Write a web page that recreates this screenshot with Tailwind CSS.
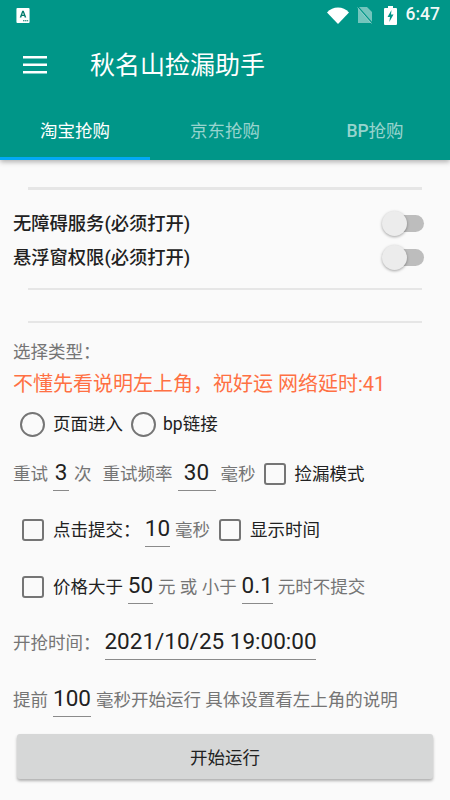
<!DOCTYPE html>
<html lang="en">
<head>
    <meta charset="UTF-8">
    <meta name="viewport" content="width=device-width, initial-scale=1.0">
    <title>秋名山捡漏助手</title>
    <script src="https://cdn.jsdelivr.net/npm/@tailwindcss/browser@4"></script>
</head>
<body class="w-[450px] h-[800px] overflow-hidden bg-[#fafafa] font-['Roboto','Noto_Sans_CJK_SC',sans-serif]">
    <!-- header -->
    <header class="relative z-10 h-[160px] bg-[#009688] text-white shadow-[0_2px_5px_rgba(0,0,0,0.3)]">
        <div class="flex items-center h-[30px] pl-4 pr-[10px]">
            <svg class="w-[14px] h-[15px]" viewBox="0 0 14 16">
                <path d="M1 0h12a1 1 0 0 1 1 1v14a1 1 0 0 1-1 1H1a1 1 0 0 1-1-1V1a1 1 0 0 1 1-1z" fill="#fff"/>
                <path d="M3.500 10 6.200 3h1.600l2.700 7H8.800l-.5-1.500H5.700L5.200 10zM6.100 7.300h1.800L7 4.700z" fill="#00796b"/>
                <path d="M7 13h1.500v1H7zM9 13h1.500v1H9zM11 13h1.500v1H11z" fill="#00796b"/>
            </svg>
            <svg class="ml-auto w-[22px] h-[17px]" viewBox="0 0 22 17"><path d="M0 5.500C3 2.200 6.800.5 11 .5s8 1.700 11 5L11 17z" fill="#fff"/></svg>
            <svg class="ml-[8px] w-[16px] h-[18px]" viewBox="0 0 16 18">
                <path d="M1 1h9l5 5v11H1z" fill="#fff" fill-opacity="0.45"/>
                <path d="M1 1 15 17" stroke="#009688" stroke-width="1.500"/>
                <path d="M0.500 1.500 14.500 17.500" stroke="#fff" stroke-opacity="0.45" stroke-width="1"/>
            </svg>
            <svg class="ml-[11px] w-[13px] h-[19px]" viewBox="0 0 13 19">
                <path d="M4 0h5v2h3a1 1 0 0 1 1 1v15a1 1 0 0 1-1 1H1a1 1 0 0 1-1-1V3a1 1 0 0 1 1-1h3z" fill="#fff"/>
                <path d="M7.500 4 3.500 11h2.500l-.7 5 4.200-7.500H7z" fill="#009688"/>
            </svg>
            <span class="ml-[9px] text-[17.500px] leading-none font-medium text-white/95">6:47</span>
        </div>
        <div class="flex items-center h-[70px] pl-[23px]">
            <svg class="w-[24px] h-[18px]" viewBox="0 0 24 18" fill="#fff">
                <rect y="0" width="24" height="2.500"/><rect y="7.500" width="24" height="2.500"/><rect y="15" width="24" height="2.500"/>
            </svg>
            <h1 class="ml-[43px] text-[25px] leading-none font-normal">秋名山捡漏助手</h1>
        </div>
        <nav class="flex h-[60px] text-[17.500px]">
            <div class="flex-1 flex items-center justify-center pt-[6px] border-b-[3px] border-[#03a9f4]">淘宝抢购</div>
            <div class="flex-1 flex items-center justify-center pt-[6px] border-b-[3px] border-transparent text-white/60">京东抢购</div>
            <div class="flex-1 flex items-center justify-center pt-[6px] border-b-[3px] border-transparent text-white/60"><span class="font-medium">BP</span>抢购</div>
        </nav>
    </header>

    <main class="px-[13px] text-[17.500px] text-[#757575]">
        <div class="h-[2.500px] mt-[27px] mx-[15px] bg-[#e6e6e6]"></div>

        <div class="mt-[17px] flex items-center justify-between h-[34px] text-[18.300px] text-[#212121] font-medium">
            <span>无障碍服务(必须打开)</span>
            <span class="relative block w-[34px] h-[17px] mr-[13px] rounded-full bg-[#bdbdbd]">
                <span class="absolute left-[-8px] top-[-4px] w-[25px] h-[25px] rounded-full bg-[#ececec] shadow-[0_1px_3px_rgba(0,0,0,0.35)]"></span>
            </span>
        </div>
        <div class="flex items-center justify-between h-[34px] text-[18.300px] text-[#212121] font-medium">
            <span>悬浮窗权限(必须打开)</span>
            <span class="relative block w-[34px] h-[17px] mr-[13px] rounded-full bg-[#bdbdbd]">
                <span class="absolute left-[-8px] top-[-4px] w-[25px] h-[25px] rounded-full bg-[#ececec] shadow-[0_1px_3px_rgba(0,0,0,0.35)]"></span>
            </span>
        </div>

        <div class="h-[2.500px] mt-[13px] mx-[15px] bg-[#e6e6e6]"></div>
        <div class="h-[2.500px] mt-[30.500px] mx-[15px] bg-[#e6e6e6]"></div>

        <div class="mt-[17px] h-[24px] flex items-center">选择类型：</div>
        <div class="mt-[5px] h-[30px] flex items-center text-[20px] text-[#ff7043] whitespace-nowrap">不懂先看说明左上角，祝好运 网络延时:41</div>

        <!-- radios -->
        <div class="mt-[10px] h-[30px] flex items-center pl-[7px] text-[#212121]">
            <span class="w-[25px] h-[25px] rounded-full border-[2.500px] border-[#757575]"></span>
            <span class="ml-[8px]">页面进入</span>
            <span class="ml-[8px] w-[25px] h-[25px] rounded-full border-[2.500px] border-[#757575]"></span>
            <span class="ml-[7px]">bp链接</span>
        </div>

        <!-- retry row -->
        <div class="mt-[18px] h-[34px] flex items-center whitespace-nowrap">
            <span>重试</span>
            <span class="ml-[5px] w-[16px] h-[34px] flex items-center justify-center pb-[1px] text-[22.500px] text-[#212121] border-b border-[#8a8a8a]">3</span>
            <span class="ml-[5px]">次</span>
            <span class="ml-[11px]">重试频率</span>
            <span class="ml-[5px] w-[38px] h-[34px] flex items-center justify-center pb-[1px] text-[22.500px] text-[#212121] border-b border-[#8a8a8a]">30</span>
            <span class="ml-[5px]">毫秒</span>
            <span class="ml-[8px] w-[22px] h-[22px] rounded-[3px] border-[2.500px] border-[#757575]"></span>
            <span class="ml-[9px] text-[#212121]">捡漏模式</span>
        </div>

        <!-- click submit row -->
        <div class="mt-[22px] h-[34px] flex items-center pl-[9px] whitespace-nowrap">
            <span class="w-[22px] h-[22px] rounded-[3px] border-[2.500px] border-[#757575]"></span>
            <span class="ml-[9px] text-[#212121]">点击提交：</span>
            <span class="ml-[4.500px] w-[25px] h-[34px] flex items-center justify-center pb-[1px] text-[22.500px] text-[#212121] border-b border-[#8a8a8a]">10</span>
            <span class="ml-[5px]">毫秒</span>
            <span class="ml-[9px] w-[22px] h-[22px] rounded-[3px] border-[2.500px] border-[#757575]"></span>
            <span class="ml-[9px] text-[#212121]">显示时间</span>
        </div>

        <!-- price row -->
        <div class="mt-[23px] h-[34px] flex items-center pl-[9px] whitespace-nowrap">
            <span class="w-[22px] h-[22px] rounded-[3px] border-[2.500px] border-[#757575]"></span>
            <span class="ml-[9px] text-[#212121]">价格大于</span>
            <span class="ml-[5px] w-[25px] h-[34px] flex items-center justify-center pb-[1px] text-[22.500px] text-[#212121] border-b border-[#8a8a8a]">50</span>
            <span class="ml-[5px]">元 或 小于</span>
            <span class="ml-[5px] w-[31px] h-[34px] flex items-center justify-center pb-[1px] text-[22.500px] text-[#212121] border-b border-[#8a8a8a]">0.1</span>
            <span class="ml-[5px]">元时不提交</span>
        </div>

        <!-- start time -->
        <div class="mt-[22px] h-[34px] flex items-center whitespace-nowrap">
            <span>开抢时间：</span>
            <span class="ml-[4.500px] w-[211px] h-[34px] flex items-center justify-center pb-[1px] text-[22.500px] text-[#212121] border-b-[1.500px] border-[#8a8a8a]">2021/10/25 19:00:00</span>
        </div>

        <!-- ahead of time -->
        <div class="mt-[23px] h-[34px] flex items-center whitespace-nowrap">
            <span>提前</span>
            <span class="ml-[5px] w-[38px] h-[34px] flex items-center justify-center pb-[1px] text-[22.500px] text-[#212121] border-b border-[#8a8a8a]">100</span>
            <span class="ml-[5px]">毫秒开始运行 具体设置看左上角的说明</span>
        </div>

        <button class="block mt-[17px] ml-[4px] w-[416px] h-[45px] pt-[3px] rounded-[3px] bg-[#d6d7d7] text-[17.500px] text-[#212121] shadow-[0_2px_3px_rgba(0,0,0,0.3)]">开始运行</button>
    </main>
</body>
</html>
